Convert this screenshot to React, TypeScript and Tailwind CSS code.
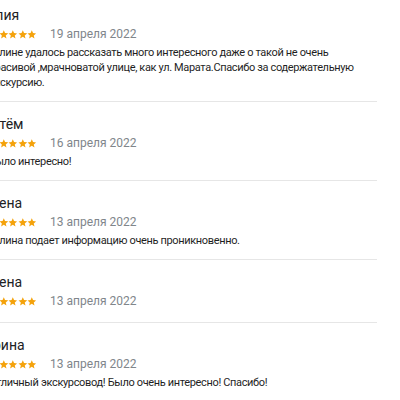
import React from 'react';

// ── Data ─────────────────────────────────────────────────────────────────────

type Review = { name: string; date: string; text?: string };

const reviews: Review[] = [
  {
    name: 'Юлия',
    date: '19 апреля 2022',
    text: 'Галине удалось рассказать много интересного даже о такой не очень красивой ,мрачноватой улице, как ул. Марата.Спасибо за содержательную экскурсию.',
  },
  { name: 'Артём', date: '16 апреля 2022', text: 'Было интересно!' },
  { name: 'Елена', date: '13 апреля 2022', text: 'Галина подает информацию очень проникновенно.' },
  { name: 'Елена', date: '13 апреля 2022' },
  { name: 'Ирина', date: '13 апреля 2022', text: 'Отличный экскурсовод! Было очень интересно! Спасибо!' },
];

// ── Stars ────────────────────────────────────────────────────────────────────

function Star() {
  return (
    <svg viewBox="0 0 24 24" className="w-[9.6px] h-[11px] shrink-0" fill="#f4a20b">
      <path d="M12 1.5l3.1 7 7.6.7-5.8 5 1.8 7.5L12 17.8l-6.7 3.9 1.8-7.5-5.8-5 7.6-.7z" />
    </svg>
  );
}

function Stars() {
  return (
    <div className="flex items-center">
      {[0, 1, 2, 3, 4].map((i) => (
        <Star key={i} />
      ))}
    </div>
  );
}

// ── Review row ───────────────────────────────────────────────────────────────

function ReviewItem({ r }: { r: Review }) {
  return (
    <div className="pt-3 pb-[11px] border-b border-[#e6e6e6]">
      <p className="ml-[-6px] text-[14px] leading-[20px] text-[#202124]">{r.name}</p>
      <div className="flex items-center h-[19px] gap-[13px]">
        <Stars />
        <span className="text-[12px] leading-[19px] text-[#80868b]">{r.date}</span>
      </div>
      {r.text && (
        <p className="mt-[1px] pr-[9px] text-[11px] tracking-[-0.35px] leading-[15px] text-[#1f1f1f]">{r.text}</p>
      )}
    </div>
  );
}

// ── Root ─────────────────────────────────────────────────────────────────────

export default function App() {
  return (
    <div
      className="w-[400px] h-[400px] overflow-hidden bg-white"
      style={{ fontFamily: 'Roboto, "Noto Sans", sans-serif' }}
    >
      <div className="ml-[-11px] mt-[-7px] w-[388px] flex flex-col">
        {reviews.map((r, i) => (
          <ReviewItem key={i} r={r} />
        ))}
      </div>
    </div>
  );
}
